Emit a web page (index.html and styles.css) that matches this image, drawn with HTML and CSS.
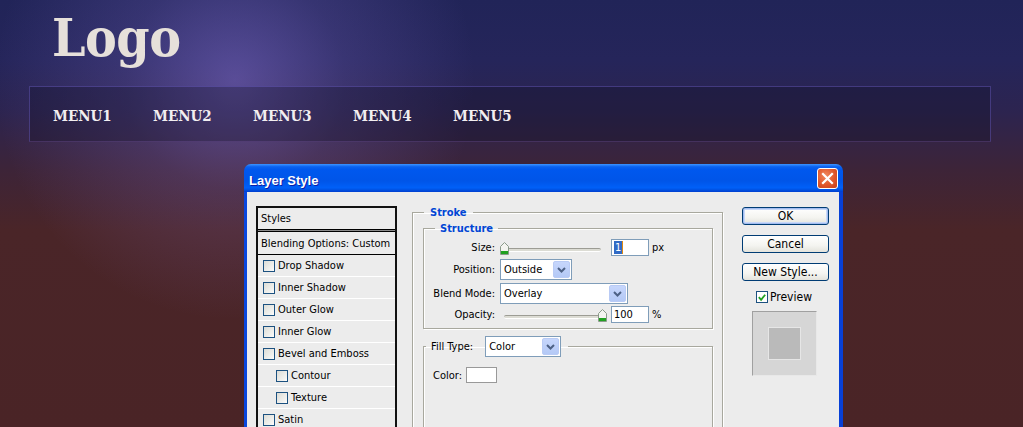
FILE: index.html
```html
<!DOCTYPE html>
<html lang="en">
<head>
<meta charset="utf-8">
<title>Logo</title>
<link rel="stylesheet" href="styles.css">
</head>
<body>
<div class="page">
  <header class="header">
    <div class="logo">Logo</div>
  </header>
  <nav class="nav">
    <a class="nav-item">MENU1</a>
    <a class="nav-item">MENU2</a>
    <a class="nav-item">MENU3</a>
    <a class="nav-item">MENU4</a>
    <a class="nav-item">MENU5</a>
  </nav>

  <div class="dialog">
    <div class="titlebar">
      <span class="title">Layer Style</span>
      <span class="close">
        <svg width="13" height="13" viewBox="0 0 13 13"><path d="M2 2 L11 11 M11 2 L2 11" stroke="#fff" stroke-width="2.2" stroke-linecap="square"/></svg>
      </span>
    </div>
    <div class="client">
      <div class="styles-list">
        <div class="sl-row sl-head">Styles</div>
        <div class="sl-row sl-blend">Blending Options: Custom</div>
        <div class="sl-row"><span class="cb"></span>Drop Shadow</div>
        <div class="sl-row"><span class="cb"></span>Inner Shadow</div>
        <div class="sl-row"><span class="cb"></span>Outer Glow</div>
        <div class="sl-row"><span class="cb"></span>Inner Glow</div>
        <div class="sl-row"><span class="cb"></span>Bevel and Emboss</div>
        <div class="sl-row sl-sub"><span class="cb"></span>Contour</div>
        <div class="sl-row sl-sub"><span class="cb"></span>Texture</div>
        <div class="sl-row"><span class="cb"></span>Satin</div>
      </div>

      <div class="settings">
        <fieldset class="group stroke">
          <legend class="legend-blue stroke-legend">Stroke</legend>
          <fieldset class="group structure">
            <legend class="legend-blue structure-legend">Structure</legend>
            <div class="form-row row-size">
              <span class="lbl">Size:</span>
              <span class="slider slider-size">
                <span class="track"></span>
                <svg class="thumb thumb-left" width="9" height="13" viewBox="0 0 9 13"><path d="M0.5 4.5 L4.5 0.5 L8.5 4.5 L8.5 12.5 L0.5 12.5 Z" fill="#f4f4f0" stroke="#8a9a8a"/><rect x="1" y="9" width="7" height="3" fill="#21a121"/></svg>
              </span>
              <span class="field"><span class="sel">1</span><span class="caret"></span></span>
              <span class="unit">px</span>
            </div>
            <div class="form-row">
              <span class="lbl">Position:</span>
              <span class="dropdown dd-position"><span class="dd-text">Outside</span><span class="dd-btn"><svg width="9" height="6" viewBox="0 0 9 6"><path d="M1 1 L4.5 4.5 L8 1" fill="none" stroke="#4d6185" stroke-width="2"/></svg></span></span>
            </div>
            <div class="form-row">
              <span class="lbl">Blend Mode:</span>
              <span class="dropdown dd-blend"><span class="dd-text">Overlay</span><span class="dd-btn"><svg width="9" height="6" viewBox="0 0 9 6"><path d="M1 1 L4.5 4.5 L8 1" fill="none" stroke="#4d6185" stroke-width="2"/></svg></span></span>
            </div>
            <div class="form-row row-opacity">
              <span class="lbl">Opacity:</span>
              <span class="slider slider-opacity">
                <span class="track"></span>
                <svg class="thumb thumb-right" width="9" height="13" viewBox="0 0 9 13"><path d="M0.5 4.5 L4.5 0.5 L8.5 4.5 L8.5 12.5 L0.5 12.5 Z" fill="#f4f4f0" stroke="#8a9a8a"/><rect x="1" y="9" width="7" height="3" fill="#21a121"/></svg>
              </span>
              <span class="field">100</span>
              <span class="unit">%</span>
            </div>
          </fieldset>

          <fieldset class="group fill">
            <legend class="fill-legend">
              <span class="fill-label">Fill Type:</span>
              <span class="dropdown dd-fill"><span class="dd-text">Color</span><span class="dd-btn"><svg width="9" height="6" viewBox="0 0 9 6"><path d="M1 1 L4.5 4.5 L8 1" fill="none" stroke="#4d6185" stroke-width="2"/></svg></span></span>
            </legend>
            <div class="color-row">
              <span class="color-label">Color:</span>
              <span class="swatch"></span>
            </div>
          </fieldset>
        </fieldset>
      </div>

      <div class="buttons">
        <button class="btn btn-default">OK</button>
        <button class="btn">Cancel</button>
        <button class="btn">New Style...</button>
        <label class="preview-check">
          <span class="cb cb-checked"><svg width="11" height="11" viewBox="0 0 11 11"><path d="M2 5 L4.5 8 L9 2.5" fill="none" stroke="#21a121" stroke-width="2"/></svg></span>
          <span class="preview-text">Preview</span>
        </label>
        <div class="preview-box"><div class="preview-inner"></div></div>
      </div>
    </div>
  </div>
</div>
</body>
</html>
```

FILE: styles.css
```css
* { box-sizing: border-box; }

html, body {
  margin: 0;
  padding: 0;
  height: 427px;
  overflow: hidden;
}

body {
  background:
    radial-gradient(circle at 235px 80px, rgba(150, 125, 230, 0.45) 0, rgba(150, 125, 230, 0.18) 110px, rgba(150, 125, 230, 0) 240px),
    linear-gradient(to bottom, #212458 0, #25255a 60px, #2c2450 110px, #3d2438 170px, #4a2528 230px, #4a2426 427px);
  font-family: "DejaVu Sans", sans-serif;
}

.page {
  display: flex;
  flex-direction: column;
}

.header {
  height: 86px;
  padding: 4px 0 0 52px;
}

.logo {
  font-family: "DejaVu Serif Condensed", "DejaVu Serif", serif;
  font-weight: bold;
  font-size: 53px;
  line-height: 66px;
  color: #e6e0da;
  letter-spacing: -0.5px;
}

.nav {
  margin: 0 32px 0 29px;
  height: 56px;
  border: 1px solid rgba(110, 95, 200, 0.45);
  border-bottom-color: rgba(110, 80, 150, 0.4);
  background: rgba(12, 10, 30, 0.28);
  display: grid;
  grid-template-columns: repeat(5, 100px);
  align-items: center;
  padding-left: 23px;
}

.nav-item {
  font-family: "DejaVu Serif Condensed", "DejaVu Serif", serif;
  font-weight: bold;
  font-size: 15px;
  color: #f2eef0;
  padding-top: 4px;
}

/* Dialog */
.dialog {
  margin: 22px 0 0 244px;
  width: 599px;
  height: 263px;
  display: flex;
  flex-direction: column;
  font-family: "DejaVu Sans Condensed", "DejaVu Sans", sans-serif;
  font-size: 11px;
  color: #000;
}

.titlebar {
  height: 28px;
  flex: none;
  border-radius: 7px 7px 0 0;
  background: linear-gradient(to bottom, #3d95ff 0%, #0a62f0 10%, #0058ee 20%, #0055e8 60%, #0060f8 85%, #0050e0 93%, #003ed0 100%);
  display: flex;
  align-items: center;
  justify-content: space-between;
  padding: 1px 5px 0 5px;
}

.title {
  font-family: "Liberation Sans", sans-serif;
  font-weight: bold;
  font-size: 13px;
  color: #fff;
  text-shadow: 1px 1px #0a1fa9;
  padding-top: 3px;
}

.close {
  width: 21px;
  height: 21px;
  border: 1px solid #fff;
  border-radius: 3px;
  background: radial-gradient(circle at 40% 35%, #f08a60 0, #e0562a 55%, #c4401c 100%);
  display: flex;
  align-items: center;
  justify-content: center;
}

.client {
  flex: 1;
  background: #ececec;
  border-left: 3px solid #0847de;
  border-right: 4px solid #0740d6;
  display: flex;
  align-items: flex-start;
  padding: 14px 0 0 9px;
  overflow: hidden;
}

/* Styles list */
.styles-list {
  width: 141px;
  border: 2px solid #111;
  border-bottom: none;
  display: flex;
  flex-direction: column;
}

.sl-row {
  height: 22px;
  display: flex;
  align-items: center;
  padding-left: 5px;
  border-bottom: 1px solid #fff;
  white-space: nowrap;
}

.sl-head {
  height: 22px;
  padding-left: 3px;
  border-bottom: 1px solid #000;
  box-shadow: 0 1px 0 #8a8a8a;
  margin-bottom: 1px;
}

.sl-blend {
  height: 24px;
  padding-left: 3px;
  border-top: 1px solid #000;
  border-bottom: 1px solid #000;
}

.sl-sub {
  padding-left: 18px;
}

.cb {
  width: 12px;
  height: 12px;
  border: 1px solid #1c5180;
  background: linear-gradient(135deg, #dcdcd6 0%, #f4f4f2 80%, #fff 100%);
  margin-right: 3px;
  flex: none;
  display: inline-flex;
  align-items: center;
  justify-content: center;
}

/* Settings */
.settings {
  margin-left: 15px;
  margin-top: 0;
}

.group {
  margin: 0;
  border: 1px solid #a8a89e;
  box-shadow: 1px 1px 0 #fff, inset 1px 1px 0 #fff;
  min-width: 0;
}

.stroke {
  width: 311px;
  height: 260px;
  padding: 0 9px 0 10px;
}

.legend-blue {
  color: #0046d5;
  font-weight: bold;
  font-family: "DejaVu Sans Condensed", "DejaVu Sans", sans-serif;
  font-size: 11px;
  line-height: 13px;
}

.stroke-legend {
  padding: 0 6px;
  margin-left: 1px;
}

.structure {
  margin-top: 3px;
  padding: 4px 0 5px 0;
  display: flex;
  flex-direction: column;
  gap: 3px;
}

.structure-legend {
  padding: 0 5px;
  margin-left: 11px;
}

.form-row {
  display: flex;
  align-items: center;
  height: 21px;
}

.row-size, .row-opacity {
  height: 17px;
}

.row-opacity {
  margin-top: -1px;
}

.lbl {
  width: 71px;
  text-align: right;
  margin-right: 5px;
  flex: none;
}

.slider {
  position: relative;
  height: 14px;
  display: block;
  flex: none;
}

.slider-size {
  width: 101px;
  margin-right: 10px;
}

.slider-opacity {
  width: 107px;
  margin-right: 4px;
  padding-left: 4px;
}

.track {
  position: absolute;
  left: 0;
  right: 0;
  top: 7px;
  height: 4px;
  border-top: 1px solid #9c9c94;
  border-bottom: 1px solid #fff;
  background: #dcdcd4;
  border-radius: 2px;
}

.slider-opacity .track {
  left: 4px;
}

.thumb {
  position: absolute;
  top: 1px;
}

.thumb-left { left: 0; }
.thumb-right { right: 0; }

.field {
  width: 38px;
  height: 17px;
  border: 1px solid #7f9db9;
  background: #fff;
  display: flex;
  align-items: center;
  padding-left: 2px;
  flex: none;
}

.sel {
  background: #316ac5;
  color: #fff;
  padding: 0 1px;
  line-height: 13px;
}

.caret {
  width: 1px;
  height: 13px;
  background: #e08a10;
}

.unit {
  margin-left: 3px;
}

.dropdown {
  height: 21px;
  border: 1px solid #7f9db9;
  background: #fff;
  display: flex;
  align-items: center;
  justify-content: space-between;
  padding: 0 1px 0 3px;
  flex: none;
}

.dd-position { width: 72px; }
.dd-blend { width: 128px; }
.dd-fill { width: 76px; }

.dd-text {
  font-size: 11px;
}

.dd-btn {
  width: 17px;
  height: 17px;
  border-radius: 2px;
  background: linear-gradient(to bottom, #c6d6fc 0%, #b4c9f6 100%);
  border: 1px solid #b9cbf5;
  display: flex;
  align-items: center;
  justify-content: center;
}

.fill {
  margin-top: 7px;
  height: 120px;
  padding: 0 0 0 9px;
}

.fill-legend {
  display: flex;
  align-items: center;
  padding: 0 7px 0 5px;
  margin-left: -7px;
}

.fill-label {
  margin-right: 12px;
}

.color-row {
  display: flex;
  align-items: center;
  margin-top: 10px;
}

.color-label {
  margin-right: 4px;
}

.swatch {
  width: 31px;
  height: 16px;
  border: 1px solid #999;
  background: #fff;
}

/* Buttons */
.buttons {
  margin-left: 19px;
  margin-top: 1px;
  display: flex;
  flex-direction: column;
  gap: 10px;
  width: 87px;
}

.btn {
  width: 87px;
  height: 18px;
  border: 1px solid #003c74;
  border-radius: 3px;
  background: linear-gradient(to bottom, #fff 0%, #f4f4f0 60%, #e4e3dc 100%);
  font-family: "DejaVu Sans Condensed", "DejaVu Sans", sans-serif;
  font-size: 12px;
  color: #000;
  padding: 0;
  line-height: 15px;
}

.btn-default {
  box-shadow: inset 0 0 0 1px #a2bcf0, inset 0 0 0 2px #c8d8f8;
}

.preview-check {
  display: flex;
  align-items: center;
  margin-top: -1px;
  padding-left: 14px;
}

.cb-checked {
  margin-right: 2px;
  background: #fff;
}

.preview-text {
  font-size: 12px;
}

.preview-box {
  margin: -3px 0 0 10px;
  width: 65px;
  height: 65px;
  background: #d6d6d6;
  border-top: 1px solid #a0a0a0;
  border-left: 1px solid #a0a0a0;
  border-right: 1px solid #e8e8e8;
  border-bottom: 1px solid #e8e8e8;
  display: flex;
  align-items: center;
  justify-content: center;
}

.preview-inner {
  width: 33px;
  height: 33px;
  background: #bababa;
  border: 1px solid #e6e6e6;
}
```
